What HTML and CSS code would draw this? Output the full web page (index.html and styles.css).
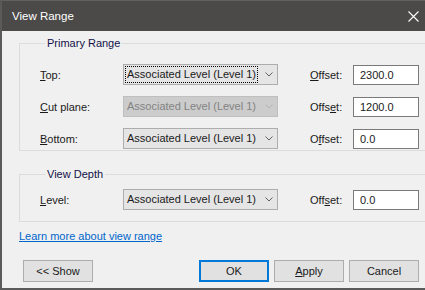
FILE: index.html
```html
<!DOCTYPE html>
<html lang="en">
<head>
  <meta charset="UTF-8">
  <title>View Range</title>
  <link rel="stylesheet" href="styles.css">
</head>
<body>
  <div class="dialog">
    <div class="titlebar">
      <span class="title">View Range</span>
      <svg class="close" width="11" height="11" viewBox="0 0 11 11">
        <path d="M0.5 0.5 L10.5 10.5 M10.5 0.5 L0.5 10.5" stroke="#fff" stroke-width="1.1" fill="none"/>
      </svg>
    </div>

    <div class="content">
      <fieldset class="group primary">
        <legend>Primary Range</legend>
        <div class="row">
          <span class="label"><u>T</u>op:</span>
          <div class="combo"><span class="value focused">Associated Level (Level 1)</span>
            <svg class="chevron" width="8" height="5" viewBox="0 0 8 5"><polyline points="0.5,0.5 4,4 7.5,0.5" fill="none" stroke="#606060" stroke-width="1"/></svg>
          </div>
          <span class="offset-label"><u>O</u>ffset:</span>
          <div class="field">2300.0</div>
        </div>
        <div class="row">
          <span class="label"><u>C</u>ut plane:</span>
          <div class="combo disabled"><span class="value">Associated Level (Level 1)</span>
            <svg class="chevron" width="8" height="5" viewBox="0 0 8 5"><polyline points="0.5,0.5 4,4 7.5,0.5" fill="none" stroke="#b4b4b4" stroke-width="1"/></svg>
          </div>
          <span class="offset-label">Offs<u>e</u>t:</span>
          <div class="field">1200.0</div>
        </div>
        <div class="row">
          <span class="label"><u>B</u>ottom:</span>
          <div class="combo"><span class="value">Associated Level (Level 1)</span>
            <svg class="chevron" width="8" height="5" viewBox="0 0 8 5"><polyline points="0.5,0.5 4,4 7.5,0.5" fill="none" stroke="#606060" stroke-width="1"/></svg>
          </div>
          <span class="offset-label">O<u>f</u>fset:</span>
          <div class="field">0.0</div>
        </div>
      </fieldset>

      <fieldset class="group depth">
        <legend>View Depth</legend>
        <div class="row">
          <span class="label"><u>L</u>evel:</span>
          <div class="combo"><span class="value">Associated Level (Level 1)</span>
            <svg class="chevron" width="8" height="5" viewBox="0 0 8 5"><polyline points="0.5,0.5 4,4 7.5,0.5" fill="none" stroke="#606060" stroke-width="1"/></svg>
          </div>
          <span class="offset-label">Off<u>s</u>et:</span>
          <div class="field">0.0</div>
        </div>
      </fieldset>

      <a class="learn" href="#">Learn more about view range</a>

      <div class="buttons">
        <button class="btn show">&lt;&lt; Show</button>
        <span class="spacer"></span>
        <button class="btn default">OK</button>
        <button class="btn"><u>A</u>pply</button>
        <button class="btn">Cancel</button>
      </div>
    </div>
  </div>
</body>
</html>
```

FILE: styles.css
```css
body {
  margin: 0;
  font-family: "Liberation Sans", Arial, sans-serif;
  font-size: 11px;
  color: #1a1a1a;
  background: #f0f0f0;
}

.dialog {
  width: 425px;
  height: 290px;
  box-sizing: border-box;
  border-left: 2px solid #5a5a5a;
  border-bottom: 2px solid #5a5a5a;
  background: #f0f0f0;
  display: flex;
  flex-direction: column;
  overflow: hidden;
}

.titlebar {
  height: 31px;
  flex: none;
  background: #4b4a48;
  border-top: 1px solid #626160;
  box-sizing: border-box;
  margin-left: -2px;
  padding: 0 6px 0 12px;
  display: flex;
  align-items: center;
  justify-content: space-between;
}

.title {
  color: #ffffff;
  font-size: 11.5px;
}

.close {
  display: block;
}

.content {
  flex: 1;
  display: flex;
  flex-direction: column;
  overflow: hidden;
}

.group {
  border: 1px solid #dcdcdc;
  margin: 4px -20px 0 17px;
  padding: 13px 0 1px 20px;
  display: flex;
  flex-direction: column;
  gap: 11px;
}

.group legend {
  margin-left: 5px;
  padding: 0 2px;
  line-height: 16px;
  color: #121248;
}

.group.depth {
  margin-top: 15px;
  padding-top: 7px;
  padding-bottom: 11px;
}

.row {
  display: flex;
  align-items: center;
  height: 21px;
  white-space: nowrap;
}

.label {
  width: 83px;
}

.combo {
  width: 155px;
  height: 21px;
  box-sizing: border-box;
  border: 1px solid #adadad;
  background: #e5e5e5;
  display: flex;
  align-items: center;
  justify-content: space-between;
  padding: 0 4px 0 2px;
}

.combo .value {
  padding: 0 1px;
  line-height: 15px;
}

.combo .value.focused {
  outline: 1px dotted #000;
}

.combo.disabled {
  background: #cccccc;
  border-color: #bfbfbf;
  color: #838383;
}

.chevron {
  display: block;
}

.offset-label {
  width: 43px;
  margin-left: 32px;
}

.field {
  width: 66px;
  height: 20px;
  box-sizing: border-box;
  border: 1px solid #7a7a7a;
  background: #ffffff;
  padding-left: 6px;
  line-height: 18px;
}

.learn {
  align-self: flex-start;
  margin: 6px 0 0 17px;
  line-height: 16px;
  color: #0066cc;
}

.buttons {
  display: flex;
  margin: 16px 6px 0 21px;
  gap: 5px;
}

.spacer {
  flex: 1;
}

.btn {
  width: 70px;
  height: 22px;
  box-sizing: border-box;
  border: 1px solid #adadad;
  background: #e1e1e1;
  font-family: "Liberation Sans", Arial, sans-serif;
  font-size: 11px;
  color: #1a1a1a;
  padding: 0;
}

.btn.default {
  border: 2px solid #0078d7;
}
```
